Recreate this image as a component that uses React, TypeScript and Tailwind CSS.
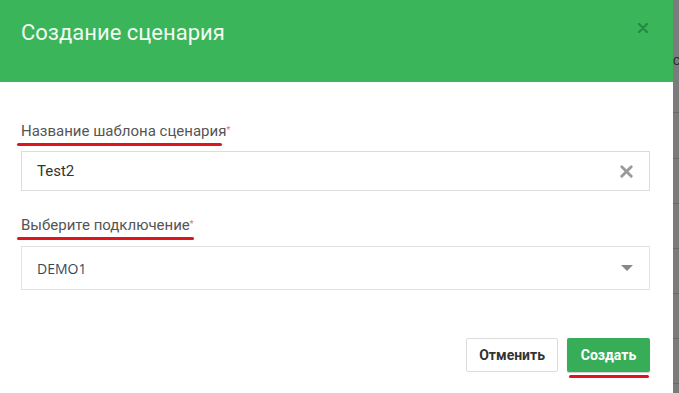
import { X } from 'lucide-react';

export default function App() {
  const rows = [112, 158, 203, 248, 293, 338, 383];

  return (
    <div className="flex w-[679px] h-[393px] overflow-hidden bg-white" style={{ fontFamily: 'Roboto, "Liberation Sans", sans-serif' }}>
      {/* Modal */}
      <div className="w-[673px] h-full flex flex-col bg-white">
        {/* Header */}
        <div className="h-[82px] shrink-0 bg-[#3ab55a] flex items-start justify-between pl-[21px] pr-[25px] pt-[18px]">
          <h2 className="text-[22px] leading-[30px] font-normal text-[#f2faf3]">Создание сценария</h2>
          <svg width="10" height="10" viewBox="0 0 10 10" className="mt-[5px]">
            <path d="M1 1 L9 9 M9 1 L1 9" stroke="#27893f" strokeWidth="2.2" strokeLinecap="round" />
          </svg>
        </div>

        {/* Body */}
        <div className="px-[21px] pr-[23px] pt-[39px]">
          {/* Template name */}
          <div className="relative">
            <label className="block text-[15px] leading-[20px] text-[#555]">
              Название шаблона сценария<sup className="text-[#ec6b6b] text-[9px] relative top-[-3px]">*</sup>
            </label>
            <div className="absolute left-[-4px] top-[22px] w-[205px] h-[3px] rounded-full bg-[#e0141e]" />
          </div>
          <div className="mt-[10px] h-[40px] border border-[#dcdcdc] flex items-center justify-between pl-[15px] pr-[13px]">
            <span className="text-[15px] text-[#333]">Test2</span>
            <X size={19} strokeWidth={3.6} className="text-[#9a9a9a]" />
          </div>

          {/* Connection */}
          <div className="relative mt-[24px]">
            <label className="block text-[15px] leading-[20px] text-[#555]">
              Выберите подключение<sup className="text-[#ec6b6b] text-[9px] relative top-[-3px]">*</sup>
            </label>
            <div className="absolute left-[-4px] top-[22px] w-[177px] h-[3px] rounded-full bg-[#e0141e]" />
          </div>
          <div className="mt-[11px] h-[44px] border border-[#e3e3e3] flex items-center justify-between pl-[15px] pr-[16px]">
            <span className="text-[14px] text-[#34495e]" style={{ fontFamily: '"Open Sans", "Noto Sans", sans-serif' }}>DEMO1</span>
            <span className="w-0 h-0 border-l-[6px] border-r-[6px] border-t-[6px] border-l-transparent border-r-transparent border-t-[#888]" />
          </div>

          {/* Actions */}
          <div className="mt-[48px] flex justify-end gap-[9px]">
            <button className="h-[34px] px-[12px] border border-[#dcdcdc] rounded-[2px] bg-white text-[14px] font-bold text-[#333]">Отменить</button>
            <div className="relative">
              <button className="h-[34px] w-[83px] rounded-[2px] bg-[#38ad58] text-[14px] font-bold text-white shadow-[0_1px_1px_rgba(0,0,0,0.2)]">Создать</button>
              <div className="absolute left-[2px] top-[37px] w-[80px] h-[3px] rounded-full bg-[#e0141e]" />
            </div>
          </div>
        </div>
      </div>

      {/* Backdrop strip */}
      <div className="relative flex-1 bg-[#7b7b7b]">
        <span className="absolute left-[0px] top-[54px] text-[11px] text-[#222]">C</span>
        {rows.map(y => (
          <div key={y} className="absolute left-0 right-0 h-px bg-[#6a6a6a]" style={{ top: y }} />
        ))}
      </div>
    </div>
  );
}
